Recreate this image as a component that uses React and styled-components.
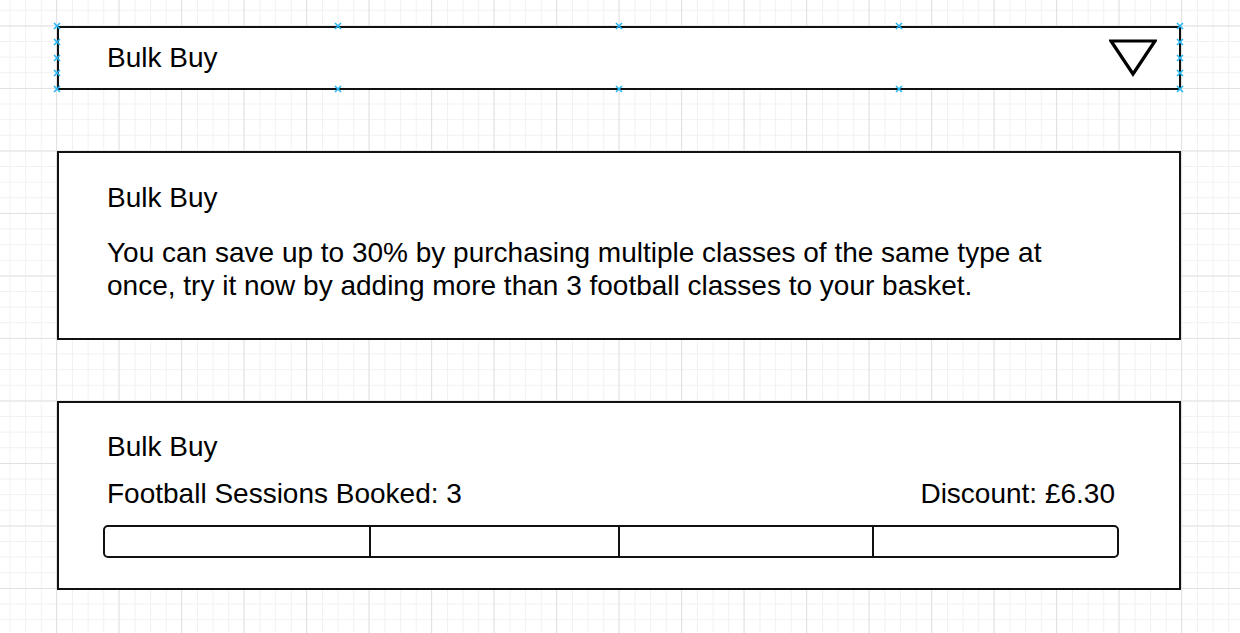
import React from "react";
import styled, { createGlobalStyle } from "styled-components";

const Global = createGlobalStyle`
  html, body { margin: 0; padding: 0; background: #fff; }
  body { font-family: "Liberation Sans", Arial, sans-serif; color: #000; }
  * { box-sizing: border-box; }
`;

const Canvas = styled.div`
  width: 1240px;
  height: 633px;
  overflow: hidden;
  padding: 26px 0 0 57px;
  background-color: #fff;
  background-image:
    linear-gradient(to right, #e2e2e2 1px, transparent 1px),
    linear-gradient(to bottom, #e2e2e2 1px, transparent 1px),
    linear-gradient(to right, #f1f1f1 1px, transparent 1px),
    linear-gradient(to bottom, #f1f1f1 1px, transparent 1px);
  background-size: 62.5px 62.5px, 62.5px 62.5px, 15.625px 15.625px, 15.625px 15.625px;
  background-position: 56px 25.5px, 56px 25.5px, 9.5px 9.75px, 9.5px 9.75px;
  display: flex;
  flex-direction: column;
  gap: 61px;
`;

const Box = styled.div`
  position: relative;
  flex: 0 0 auto;
  width: 1124px;
  height: ${(p) => p.$h}px;
  border: 2px solid #111;
  background: #fff;
  display: flex;
  flex-direction: column;
  padding: ${(p) => p.$pad};
`;

const DropdownBox = styled(Box)`
  flex-direction: row;
  align-items: center;
  justify-content: space-between;
  padding: 0 22px 1px 48px;
`;

const Title = styled.div`
  font-size: 28px;
  line-height: 33px;
`;

const Paragraph = styled.p`
  margin: 22px 0 0;
  font-size: 28px;
  line-height: 33px;
`;

const InfoRow = styled.div`
  display: flex;
  justify-content: space-between;
  margin-top: 14px;
  padding-right: 16px;
  font-size: 28px;
  line-height: 33px;
`;

const Bar = styled.div`
  flex: 0 0 auto;
  display: flex;
  margin: 15px 0 0 -4px;
  width: 1016px;
  height: 33px;
  border: 2px solid #111;
  border-radius: 5px;
  overflow: hidden;
`;

const Segment = styled.div`
  flex: 0 0 ${(p) => p.$w}px;
  height: 100%;
  border-left: ${(p) => (p.$first ? "none" : "2px solid #111")};
  &:last-child { flex: 1 1 auto; }
`;

const Handle = styled.svg`
  position: absolute;
  width: 8px;
  height: 8px;
  left: ${(p) => p.$x}px;
  top: ${(p) => p.$y}px;
  overflow: visible;
`;

const handlePts = (() => {
  const pts = [];
  const w = 1124, h = 64;
  [0, 0.25, 0.5, 0.75, 1].forEach((f) => {
    pts.push([f * (w - 1), 0]);
    pts.push([f * (w - 1), h - 1]);
  });
  [0.25, 0.5, 0.75].forEach((f) => {
    pts.push([0, f * (h - 1)]);
    pts.push([w - 1, f * (h - 1)]);
  });
  return pts;
})();

const HandleMark = ({ x, y }) => (
  <Handle $x={x - 2 - 4} $y={y - 2 - 4} viewBox="0 0 8 8">
    <path d="M1 1 L7 7 M7 1 L1 7" stroke="#29b6f2" strokeWidth="1.6" fill="none" />
  </Handle>
);

const Caret = () => (
  <svg width="48" height="38" viewBox="0 0 48 38">
    <polygon points="2,2 46,2 24,35" fill="none" stroke="#000" strokeWidth="3.2" strokeLinejoin="miter" />
  </svg>
);

const segments = [264, 249, 254, 245];

export default function App() {
  return (
    <>
      <Global />
      <Canvas>
        <DropdownBox $h={64}>
          <Title>Bulk Buy</Title>
          <Caret />
          {handlePts.map(([x, y], i) => (
            <HandleMark key={i} x={x} y={y} />
          ))}
        </DropdownBox>
        <Box $h={189} $pad="28px 0 0 48px">
          <Title>Bulk Buy</Title>
          <Paragraph>
            You can save up to 30% by purchasing multiple classes of the same type at
            <br />
            once, try it now by adding more than 3 football classes to your basket.
          </Paragraph>
        </Box>
        <Box $h={189} $pad="27px 48px 0 48px">
          <Title>Bulk Buy</Title>
          <InfoRow>
            <span>Football Sessions Booked: 3</span>
            <span>Discount: £6.30</span>
          </InfoRow>
          <Bar>
            {segments.map((w, i) => (
              <Segment key={i} $w={w} $first={i === 0} />
            ))}
          </Bar>
        </Box>
      </Canvas>
    </>
  );
}
